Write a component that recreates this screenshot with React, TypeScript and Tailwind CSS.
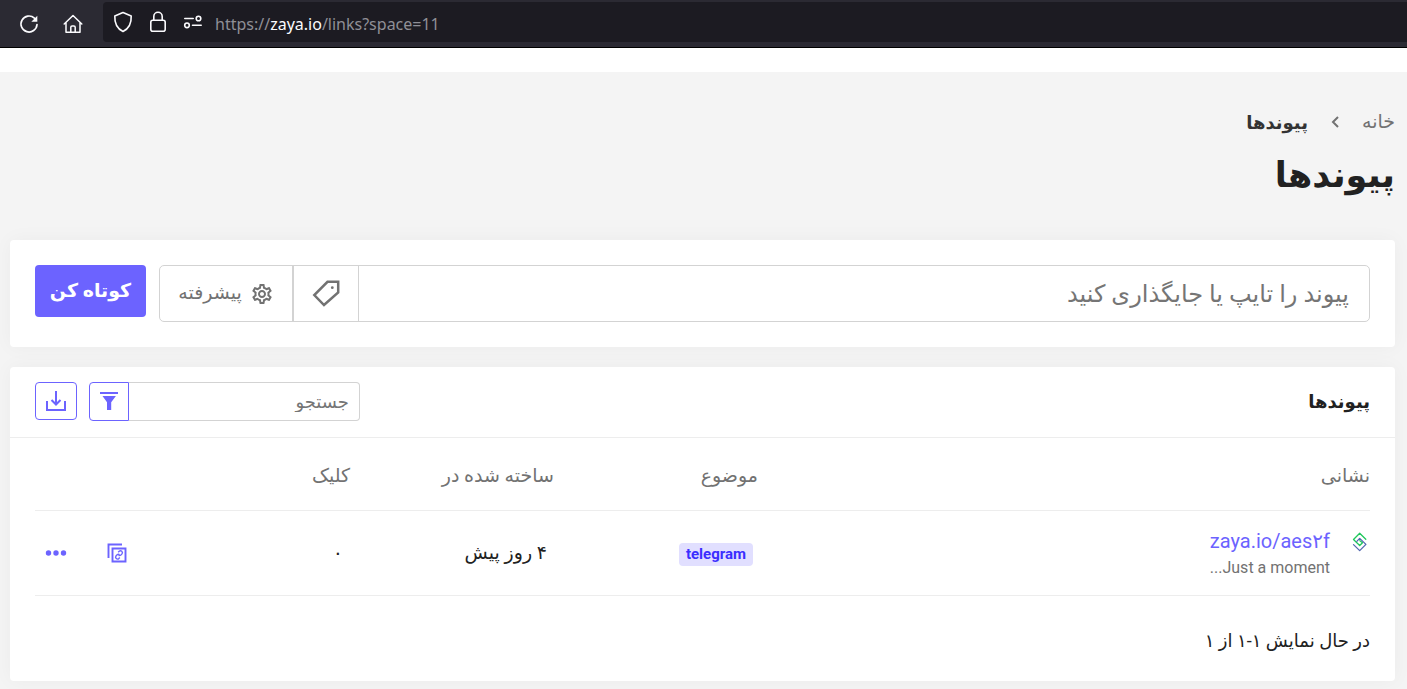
import { useState } from "react";

function ReloadIcon() {
  return (
    <svg width="20" height="20" viewBox="0 0 20 20" fill="none" stroke="currentColor" strokeWidth="1.7">
      <path d="M18 10.5a8 8 0 1 1-2.6-6.4" strokeLinecap="round" />
      <path d="M18.3 1.8v6h-6z" fill="currentColor" stroke="none" />
    </svg>
  );
}

function HomeIcon() {
  return (
    <svg width="20" height="20" viewBox="0 0 20 20" fill="none" stroke="currentColor" strokeWidth="1.5" strokeLinecap="round" strokeLinejoin="round">
      <path d="M1.2 10 10 1.5l8.8 8.5M3 8.8v9.4h14V8.8" />
      <path d="M7.8 18v-4.8c0-.8.5-1.3 1.3-1.3h1.8c.8 0 1.3.5 1.3 1.3V18" />
    </svg>
  );
}

function ShieldIcon() {
  return (
    <svg width="20" height="22" viewBox="0 0 20 22" fill="none" stroke="currentColor" strokeWidth="1.6" strokeLinejoin="round">
      <path d="M10 1.5 18.2 5c.3 6.5-2 12.5-8.2 15.5C3.8 17.5 1.5 11.5 1.8 5z" />
    </svg>
  );
}

function LockIcon() {
  return (
    <svg width="16" height="22" viewBox="0 0 16 22" fill="none" stroke="currentColor" strokeWidth="1.6">
      <rect x="0.8" y="9.2" width="14.4" height="11" rx="2" />
      <path d="M3.8 9V5.5a4.2 4.2 0 0 1 8.4 0V9" />
    </svg>
  );
}

function PermissionsIcon() {
  return (
    <svg width="20" height="14" viewBox="0 0 20 14" fill="none" stroke="currentColor" strokeWidth="1.6" strokeLinecap="round">
      <circle cx="15.5" cy="3.5" r="2.3" />
      <circle cx="4" cy="10.3" r="2.3" />
      <path d="M1.8 3.5h8.4M9.5 10.3h8.7" />
    </svg>
  );
}

function GearIcon() {
  return (
    <svg width="24" height="24" viewBox="0 0 24 24" fill="currentColor">
      <path d="M19.43 12.98c.04-.32.07-.64.07-.98s-.03-.66-.07-.98l2.11-1.65c.19-.15.24-.42.12-.64l-2-3.46c-.09-.16-.26-.25-.44-.25-.06 0-.12.01-.17.03l-2.49 1c-.52-.4-1.08-.73-1.69-.98l-.38-2.65C14.46 2.18 14.25 2 14 2h-4c-.25 0-.46.18-.49.42l-.38 2.65c-.61.25-1.17.59-1.69.98l-2.49-1c-.06-.02-.12-.03-.18-.03-.17 0-.34.09-.43.25l-2 3.46c-.13.22-.07.49.12.64l2.11 1.65c-.04.32-.07.65-.07.98s.03.66.07.98l-2.11 1.65c-.19.15-.24.42-.12.64l2 3.46c.09.16.26.25.44.25.06 0 .12-.01.17-.03l2.49-1c.52.4 1.08.73 1.69.98l.38 2.65c.03.24.24.42.49.42h4c.25 0 .46-.18.49-.42l.38-2.65c.61-.25 1.17-.59 1.69-.98l2.49 1c.06.02.12.03.18.03.17 0 .34-.09.43-.25l2-3.46c.12-.22.07-.49-.12-.64zm-1.98-1.71c.04.31.05.52.05.73 0 .21-.02.43-.05.73l-.14 1.13.89.7 1.08.84-.7 1.21-1.27-.51-1.04-.42-.9.68c-.43.32-.84.56-1.25.73l-1.06.43-.16 1.13-.2 1.35h-1.4l-.19-1.35-.16-1.13-1.06-.43c-.43-.18-.83-.41-1.23-.71l-.91-.7-1.06.43-1.27.51-.7-1.21 1.08-.84.89-.7-.14-1.13c-.03-.31-.05-.54-.05-.74s.02-.43.05-.73l.14-1.13-.89-.7-1.08-.84.7-1.21 1.27.51 1.04.42.9-.68c.43-.32.84-.56 1.25-.73l1.06-.43.16-1.13.2-1.35h1.39l.19 1.35.16 1.13 1.06.43c.43.18.83.41 1.23.71l.91.7 1.06-.43 1.27-.51.7 1.21-1.07.85-.89.7zM12 8c-2.21 0-4 1.79-4 4s1.79 4 4 4 4-1.79 4-4-1.79-4-4-4m0 6c-1.1 0-2-.9-2-2s.9-2 2-2 2 .9 2 2-.9 2-2 2" />
    </svg>
  );
}

function TagIcon() {
  return (
    <svg width="28" height="28" viewBox="0 0 28 28" fill="none" stroke="currentColor" strokeWidth="2.5">
      <path d="M15.5 1.8h10.7v10.7L12 25 2.3 15z" />
      <circle cx="20.3" cy="7.7" r="1.4" fill="currentColor" stroke="none" />
    </svg>
  );
}

function FilterIcon() {
  return (
    <svg width="20" height="20" viewBox="0 0 20 20" fill="currentColor">
      <path d="M1 0h18v2H1zM3.5 4h13.4l-4.7 6.2V18H8v-7.8z" />
    </svg>
  );
}

function DownloadIcon() {
  return (
    <svg width="20" height="20" viewBox="0 0 20 20" fill="none" stroke="currentColor" strokeWidth="2">
      <path d="M1 10v9h18v-9M10 0v13M5.5 9l4.5 4.5L14.5 9" />
    </svg>
  );
}

function CopyLinkIcon() {
  return (
    <svg width="20" height="20" viewBox="0 0 20 20" fill="none" stroke="currentColor" strokeWidth="1.9">
      <path d="M1.5 15V1.5H15M5.5 5.5h13v13h-13z" />
      <path d="M11.2 9.2l1-1c1.7-1.4 4.2.7 2.8 2.7l-1.1 1.1c-.8.7-1.7.7-2.4.2M12.8 14.6l-1 1c-1.7 1.4-4.2-.7-2.8-2.7l1.1-1.1c.8-.7 1.7-.7 2.4-.2" strokeWidth="1.4" />
    </svg>
  );
}

function SiteLogo() {
  return (
    <svg width="20" height="20" viewBox="0 0 20 20" fill="none" strokeWidth="1.3" strokeLinejoin="round" strokeLinecap="round">
      <path d="M15.8 7.2 9.7 1.3 3.5 7.5l6.2 6 2.8-2.8-2.6-2" stroke="#1fc75c" />
      <path d="M6.800 9.400l2.900-3 6.200 6-6.200 6.200-6.200-6" stroke="#5468b0" />
    </svg>
  );
}

function BrowserBar() {
  return (
    <header className="flex h-12 items-center border-b border-black bg-[#2b2a33] text-[#fbfbfe]">
      <div className="flex shrink-0 items-center gap-6 pr-5 pl-[19px]">
        <button aria-label="Reload">
          <ReloadIcon />
        </button>
        <button aria-label="Home">
          <HomeIcon />
        </button>
      </div>
      <div className="mb-1 flex h-10 flex-1 items-center gap-3 rounded-l bg-[#1c1b22] pl-[10px]">
        <div className="flex items-center gap-[17px]">
          <ShieldIcon />
          <LockIcon />
          <PermissionsIcon />
        </div>
        <span className="pt-1 font-['Noto_Sans','Open_Sans',sans-serif] text-[16px] text-[#8f8f96]">
          https://<span className="text-[#fbfbfe]">zaya.io</span>/links?space=11
        </span>
      </div>
    </header>
  );
}

function ShortenForm() {
  const [url, setUrl] = useState("");

  return (
    <form
      className="flex items-start gap-[13px] rounded bg-white p-[25px] shadow-[0_0_20px_rgba(0,0,0,0.04)]"
      onSubmit={(e) => e.preventDefault()}
    >
      <div className="flex h-[57px] flex-1 rounded-[5px] border border-[#d3d3d3] text-[#727272]">
        <input
          type="text"
          aria-label="پیوند را تایپ یا جایگذاری کنید"
          placeholder="پیوند را تایپ یا جایگذاری کنید"
          value={url}
          onChange={(e) => setUrl(e.target.value)}
          className="min-w-0 flex-1 bg-transparent px-5 text-[24px] outline-none placeholder:text-[#757575]"
        />
        <button type="button" aria-label="برچسب" className="flex w-[65px] items-center justify-center border-r border-[#d3d3d3]">
          <TagIcon />
        </button>
        <button type="button" className="flex w-[134px] items-center justify-center gap-2 border-r-2 border-[#d3d3d3] text-[19px]">
          <GearIcon />
          پیشرفته
        </button>
      </div>
      <button type="submit" className="h-[52px] w-[111px] rounded bg-[#6c63ff] text-[19px] font-bold text-white">
        کوتاه کن
      </button>
    </form>
  );
}

function LinksTable() {
  return (
    <table className="w-full table-fixed text-right text-[19px]">
      <thead>
        <tr className="h-[72px] border-b border-[#ededed] text-[#727272]">
          <th className="pt-1 font-normal">نشانی</th>
          <th className="w-[204px] pt-1 font-normal">موضوع</th>
          <th className="w-[204px] pt-1 font-normal">ساخته شده در</th>
          <th className="w-[204px] pt-1 font-normal">کلیک</th>
          <th className="w-[111px]" aria-label="عملیات" />
        </tr>
      </thead>
      <tbody>
        <tr className="h-[85px] border-b border-[#ededed] text-[#212121]">
          <td>
            <div className="flex gap-5">
              <div className="pt-[6px]">
                <SiteLogo />
              </div>
              <div>
                <a href="#zaya" className="block text-[20px] leading-[30px] text-[#6c63ff]">
                  zaya.io/aes۲f
                </a>
                <div className="text-[16px] leading-6 text-[#727272]">Just a moment...</div>
              </div>
            </div>
          </td>
          <td className="pt-[2px] pr-[5px]">
            <a href="#telegram" className="inline-block rounded bg-[#e1dfff] px-[7px] text-[15px] leading-[23px] font-bold text-[#3b2eff]">
              telegram
            </a>
          </td>
          <td className="pt-[2px] pr-[7px]">۴ روز پیش</td>
          <td className="pt-[2px] pr-[7px]">۰</td>
          <td>
            <div className="flex items-center justify-between pr-[19px] pl-[10px] text-[#6c63ff]">
              <button aria-label="کپی">
                <CopyLinkIcon />
              </button>
              <button aria-label="بیشتر">
                <svg width="22" height="20" viewBox="0 0 22 20" fill="currentColor">
                  <circle cx="3.5" cy="10" r="2.7" />
                  <circle cx="11" cy="10" r="2.7" />
                  <circle cx="18.5" cy="10" r="2.7" />
                </svg>
              </button>
            </div>
          </td>
        </tr>
      </tbody>
    </table>
  );
}

export default function App() {
  const [search, setSearch] = useState("");

  return (
    <div className="flex min-h-screen flex-col bg-white">
      <BrowserBar />

      <main
        dir="rtl"
        className="mt-6 flex-1 bg-[#f4f4f4] pt-9 pr-3 pb-2 pl-[10px] font-['Roboto','DejaVu_Sans',sans-serif] text-[#212121]"
      >
        {/* Breadcrumb */}
        <nav className="flex h-7 items-center gap-[21px] text-[19px]">
          <a href="#home" className="text-[#727272]">
            خانه
          </a>
          <svg width="12" height="14" viewBox="0 0 12 14" fill="none" stroke="#727272" strokeWidth="2">
            <path d="M9 2 4 7l5 5" />
          </svg>
          <span className="text-[18px] font-semibold text-[#333333]">پیوندها</span>
        </nav>

        <h1 className="mt-3 mb-9 text-[35px] leading-[56px] font-semibold">پیوندها</h1>

        <div className="space-y-5">
          <ShortenForm />

          {/* Links */}
          <section className="rounded bg-white shadow-[0_0_20px_rgba(0,0,0,0.04)]">
            <div className="flex h-[71px] items-start justify-between border-b border-[#ededed] px-[25px] pt-[15px]">
              <h2 className="text-[18px] leading-10 font-semibold">پیوندها</h2>
              <div className="flex items-start gap-3">
                <div className="flex h-[39px] w-[271px]">
                  <input
                    type="search"
                    aria-label="جستجو"
                    placeholder="جستجو"
                    value={search}
                    onChange={(e) => setSearch(e.target.value)}
                    className="min-w-0 flex-1 rounded-r border border-l-0 border-[#d3d3d3] px-[10px] text-[18px] outline-none placeholder:text-[#757575]"
                  />
                  <button aria-label="فیلتر" className="flex w-10 items-center justify-center rounded-l border border-[#6c63ff] text-[#6c63ff]">
                    <FilterIcon />
                  </button>
                </div>
                <button aria-label="بارگیری" className="flex h-[38px] w-[42px] items-center justify-center rounded border border-[#6c63ff] text-[#6c63ff]">
                  <DownloadIcon />
                </button>
              </div>
            </div>
            <div className="px-[25px]">
              <LinksTable />
              <p className="pt-[31px] pb-[26px] text-[18px] leading-7">در حال نمایش ۱-۱ از ۱</p>
            </div>
          </section>
        </div>
      </main>
    </div>
  );
}
